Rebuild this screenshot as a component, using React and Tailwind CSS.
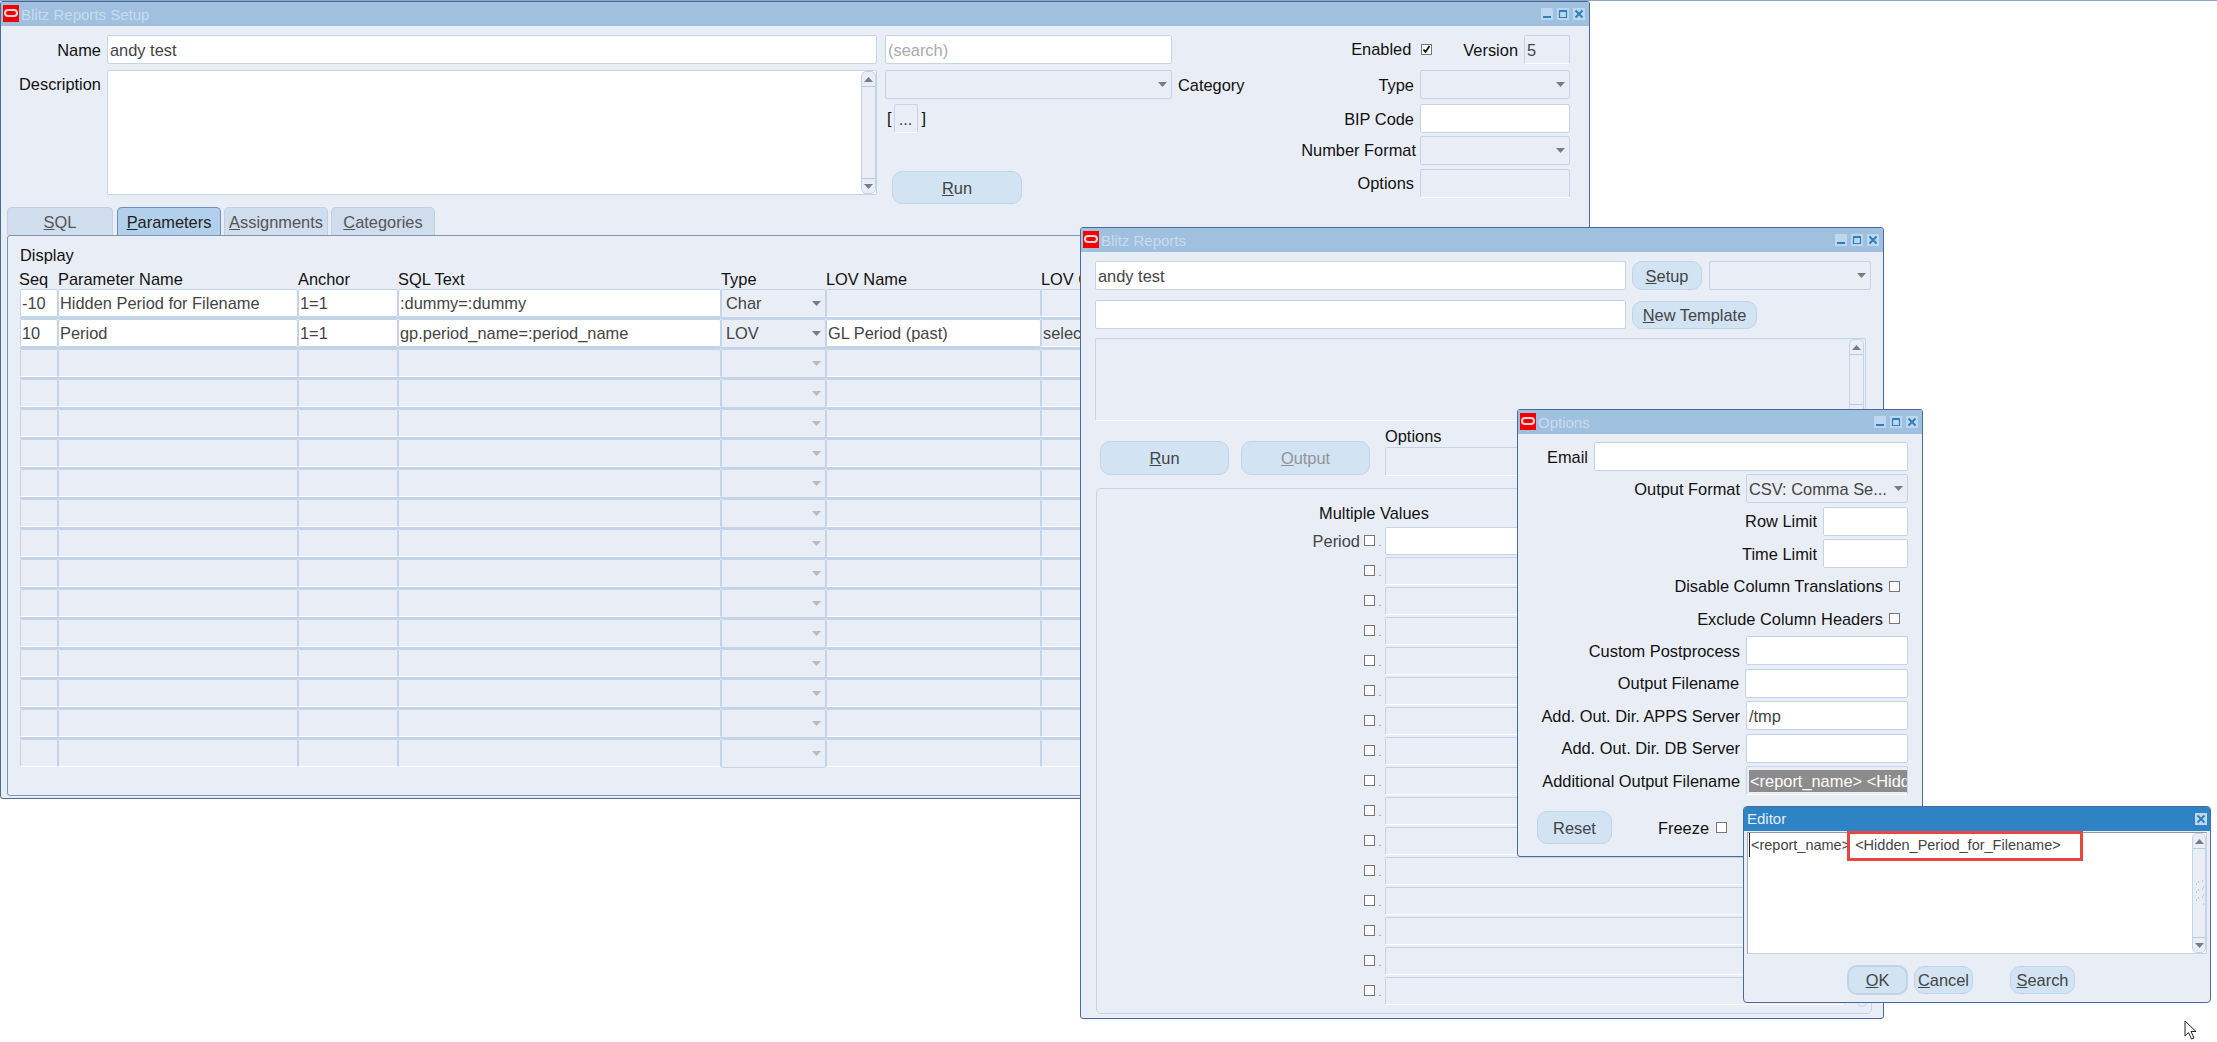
const Logo = () => (
    <div className="w-[16px] h-[17px] bg-[#f40000] flex items-center justify-center shrink-0 ml-px mb-px">
        <div className="w-[14px] h-[8px] rounded-full border-2 border-[#f6d6d6] mb-[2px]"></div>
    </div>
)

const Ctrl = ({ type }) => (
    <div className="w-[12px] h-[12px] bg-[#bcd7ef] flex items-center justify-center">
        <svg width="12" height="12" viewBox="0 0 12 12">
            {type === "min" && <rect x="2" y="8" width="8" height="2" fill="#2f7fc0" />}
            {type === "max" && <path d="M2.500 3.500h7v6h-7z M2 2.500h8" fill="none" stroke="#2f7fc0" strokeWidth="1.2" />}
            {type === "close" && <path d="M2.500 2.500l7 7M9.500 2.500l-7 7" fill="none" stroke="#2f7fc0" strokeWidth="2" />}
        </svg>
    </div>
)

const Win = ({ title, className, children }) => (
    <div className={`absolute border border-[#4a6a9c] px-px pb-px rounded-[3px] bg-[#e9eef6] overflow-hidden ${className}`}>
        <div className="h-[24px] -mx-px pl-px pr-px bg-[#9fc1df] flex items-center">
            <Logo />
            <span className="ml-[2px] text-[15px] leading-none text-[#c9dcee]">{title}</span>
            <div className="ml-auto flex gap-[4px] pr-[3px]">
                <Ctrl type="min" />
                <Ctrl type="max" />
                <Ctrl type="close" />
            </div>
        </div>
        {children}
    </div>
)

const Arrow = ({ up, light }) => (
    <svg width="9" height="5" viewBox="0 0 9 5" className="shrink-0">
        <path d={up ? "M4.500 0L9 5H0z" : "M0 0h9L4.500 5z"} fill={light ? "#b7bac0" : "#777c88"} />
    </svg>
)

const Field = ({ white, className = "", children }) => (
    <div className={`h-[29px] shrink-0 rounded-[2px] border border-[#c3d4e8] flex items-center px-[2px] pt-px whitespace-nowrap overflow-hidden text-[#444] ${white ? "bg-white" : "bg-[#e9eef6] border-b-white"} ${className}`}>
        {children}
    </div>
)

const Combo = ({ className = "", light, children }) => (
    <div className={`h-[29px] shrink-0 rounded-[2px] border border-[#c3d4e8] bg-[#e9eef6] flex items-center justify-between pl-[2px] pr-[4px] text-[#444] whitespace-nowrap ${className}`}>
        <span>{children}</span>
        <Arrow light={light} />
    </div>
)

const Btn = ({ className = "", children }) => (
    <div className={`shrink-0 rounded-[10px] border border-[#c0d4e8] bg-[#d2e3f3] flex items-center justify-center pt-px text-[#444] ${className}`}>
        {children}
    </div>
)

const Check = ({ checked, className = "" }) => (
    <div className={`w-[11px] h-[11px] shrink-0 border border-[#777] bg-white flex items-center justify-center ${className}`}>
        {checked && (
            <svg width="9" height="9" viewBox="0 0 9 9">
                <path d="M1.500 4.500l2 2.500 4-6" fill="none" stroke="#111" strokeWidth="1.8" />
            </svg>
        )}
    </div>
)

const Scrollbar = ({ grip, className = "" }) => (
    <div className={`flex flex-col border border-[#c3d4e8] rounded-[5px] bg-[#e9eef6] ${className}`}>
        <div className="h-[15px] border-b border-[#b9c9dd] flex items-center justify-center"><Arrow up /></div>
        <div className="flex-1 flex items-center justify-center">
            {grip && (
                <svg width="9" height="26" viewBox="0 0 9 26">
                    <path d="M1 4h1M7 1h1M1 12h1M7 9h1M1 20h1M7 17h1M3 2h1M8 7h1M3 10h1M8 15h1M3 18h1M8 24h1" stroke="#9aa6b5" />
                </svg>
            )}
        </div>
        <div className="h-[15px] border-t border-[#b9c9dd] flex items-center justify-center"><Arrow /></div>
    </div>
)

const Tab = ({ active, className = "", children }) => (
    <div className={`h-[28px] rounded-t-[5px] border border-b-0 flex items-center justify-center pt-px ${active ? "bg-[#b2d0ec] border-[#6f8fb8] text-[#222]" : "bg-[#cfdded] border-[#c0d0e4] text-[#555]"} ${className}`}>
        {children}
    </div>
)

const widths = ["w-[38px]", "w-[240px]", "w-[100px]", "w-[323px]", "w-[105px]", "w-[215px]", "w-[300px]"]

const Cell = ({ className = "", white, children }) => (
    <div className={`h-[28px] shrink-0 rounded-[2px] border border-[#c3d4e8] flex items-center pl-px whitespace-nowrap overflow-hidden text-[#444] ${white ? "bg-white" : "bg-[#e9eef6] border-b-white"} ${className}`}>
        {children}
    </div>
)

const paramRows = [
    ["-10", "Hidden Period for Filename", "1=1", ":dummy=:dummy", "Char", "", ""],
    ["10", "Period", "1=1", "gp.period_name=:period_name", "LOV", "GL Period (past)", "select"],
    ...Array.from({ length: 14 }, () => ["", "", "", "", "", "", ""]),
]

const ParamTable = () => (
    <div>
        {paramRows.map((r, i) => (
            <div key={i} className="flex h-[30px] w-max border-b-2 border-[#c3d4e8] last:border-b-0">
                <Cell white={i < 2} className={widths[0]}>{r[0]}</Cell>
                <Cell white={i < 2} className={widths[1]}>{r[1]}</Cell>
                <Cell white={i < 2} className={widths[2]}>{r[2]}</Cell>
                <Cell white={i < 2} className={widths[3]}>{r[3]}</Cell>
                <Combo light={i > 1} className={`h-[28px] ${widths[4]}`}><span className="ml-[2px]">{r[4]}</span></Combo>
                <Cell white={i === 1} className={widths[5]}>{r[5]}</Cell>
                <Cell className={widths[6]}>{r[6]}</Cell>
            </div>
        ))}
    </div>
)

const SetupWindow = () => (
    <Win title="Blitz Reports Setup" className="left-0 top-px w-[1590px] h-[798px]">
        <div className="flex items-start pt-[9px] h-[178px]">
            <div className="w-[875px] shrink-0">
                <div className="flex items-center gap-[6px]">
                    <span className="w-[99px] text-right pt-px">Name</span>
                    <Field white className="flex-1">andy test</Field>
                </div>
                <div className="flex items-start gap-[6px] mt-[6px]">
                    <span className="w-[99px] text-right mt-[2px] whitespace-nowrap">Description</span>
                    <div className="flex-1 h-[125px] rounded-[2px] border border-[#c3d4e8] bg-white flex justify-end">
                        <Scrollbar className="w-[15px] h-full" />
                    </div>
                </div>
            </div>
            <div className="w-[400px] ml-[8px] shrink-0">
                <Field white className="w-[287px]"><span className="text-[#aaa]">(search)</span></Field>
                <div className="flex items-center gap-[6px] mt-[6px]">
                    <Combo className="w-[287px]" />
                    <span className="pt-px">Category</span>
                </div>
                <div className="flex items-center mt-[5px] pl-[2px]">
                    <span>[</span>
                    <Field className="w-[24px] ml-[2px] justify-center">...</Field>
                    <span className="ml-[4px]">]</span>
                </div>
                <Btn className="w-[130px] h-[33px] ml-[7px] mt-[38px]"><span><u>R</u>un</span></Btn>
            </div>
            <div className="flex-1 flex flex-col items-end pr-[18px]">
                <div className="flex items-center h-[29px]">
                    <span>Enabled</span>
                    <Check checked className="ml-[10px]" />
                    <span className="ml-[31px] pt-px">Version</span>
                    <Field className="w-[46px] ml-[6px]">5</Field>
                </div>
                <div className="flex items-center gap-[6px] mt-[6px] whitespace-nowrap">
                    <span className="pt-px">Type</span>
                    <Combo className="w-[150px]" />
                </div>
                <div className="flex items-center gap-[6px] mt-[5px] whitespace-nowrap">
                    <span className="pt-px">BIP Code</span>
                    <Field white className="w-[150px]" />
                </div>
                <div className="flex items-center gap-[4px] mt-[3px] whitespace-nowrap">
                    <span>Number Format</span>
                    <Combo className="w-[150px]" />
                </div>
                <div className="flex items-center gap-[6px] mt-[4px] whitespace-nowrap">
                    <span>Options</span>
                    <Field className="w-[150px]" />
                </div>
            </div>
        </div>
        <div className="flex pl-[5px] mt-[3px]">
            <Tab className="w-[106px]"><span><u>S</u>QL</span></Tab>
            <Tab active className="w-[104px] ml-[4px]"><span><u>P</u>arameters</span></Tab>
            <Tab className="w-[104px] ml-[3px]"><span><u>A</u>ssignments</span></Tab>
            <Tab className="w-[104px] ml-[3px]"><span><u>C</u>ategories</span></Tab>
        </div>
        <div className="ml-[5px] mr-[13px] h-[561px] border border-[#7b95b8] rounded-[3px] pl-[12px] pt-[9px]">
            <div className="h-[20px] leading-[20px]">Display</div>
            <div className="flex h-[20px] leading-[20px] mt-[4px] whitespace-nowrap">
                <span className={`${widths[0]} -ml-px`}>Seq</span>
                <span className={`${widths[1]} ml-px`}>Parameter Name</span>
                <span className={widths[2]}>Anchor</span>
                <span className={widths[3]}>SQL Text</span>
                <span className={widths[4]}>Type</span>
                <span className={widths[5]}>LOV Name</span>
                <span className={widths[6]}>LOV Command</span>
            </div>
            <ParamTable />
        </div>
    </Win>
)

const multiRows = Array.from({ length: 16 }, (_, i) => i)

const ReportsWindow = () => (
    <Win title="Blitz Reports" className="left-[1080px] top-[227px] w-[804px] h-[792px]">
        <div className="pl-[13px] pt-[9px]">
            <div className="flex items-center">
                <Field white className="w-[531px]">andy test</Field>
                <Btn className="w-[70px] h-[29px] ml-[6px]"><span><u>S</u>etup</span></Btn>
                <Combo className="w-[162px] ml-[7px]" />
            </div>
            <div className="flex items-center mt-[10px]">
                <Field white className="w-[531px]" />
                <Btn className="w-[125px] h-[28px] ml-[6px]"><span><u>N</u>ew Template</span></Btn>
            </div>
            <div className="w-[771px] h-[83px] mt-[9px] rounded-[2px] border border-[#c3d4e8] border-b-white flex justify-end">
                <Scrollbar className="w-[15px] h-full mr-px" />
            </div>
            <div className="flex items-start mt-[5px] h-[50px]">
                <Btn className="w-[129px] h-[34px] ml-[5px] mt-[15px]"><span><u>R</u>un</span></Btn>
                <Btn className="w-[129px] h-[34px] ml-[12px] mt-[15px]"><span className="text-[#8f9499]"><u>O</u>utput</span></Btn>
                <div className="ml-[15px]">
                    <div className="h-[20px] leading-[20px]">Options</div>
                    <Field className="w-[400px] mt-px" />
                </div>
            </div>
        </div>
        <div className="ml-[14px] mt-[12px] w-[776px] h-[526px] border border-[#c3d4e8] rounded-[5px] flex">
            <div className="w-[760px]">
                <div className="h-[20px] leading-[20px] mt-[14px] pl-[222px] whitespace-nowrap">Multiple Values</div>
                <div className="mt-[4px]">
                    {multiRows.map((i) => (
                        <div key={i} className="flex h-[30px] border-b-2 border-transparent">
                            <span className="w-[263px] h-[28px] leading-[29px] text-right text-[#444]">{i === 0 ? "Period" : ""}</span>
                            <Check className="ml-[4px] mt-[8px]" />
                            <span className="w-[10px] text-[10px] leading-[32px] text-center text-[#777]">.</span>
                            <Cell white={i === 0} className="w-[460px]" />
                        </div>
                    ))}
                </div>
            </div>
            <Scrollbar className="w-[10px] h-[480px] mt-[38px]" />
        </div>
    </Win>
)

const optionRows = [
    { label: "Email", w: "w-[314px]", white: true },
    { label: "Output Format", w: "w-[162px]", combo: "CSV: Comma Se..." },
    { label: "Row Limit", w: "w-[85px]", white: true },
    { label: "Time Limit", w: "w-[85px]", white: true },
    { label: "Disable Column Translations", check: true },
    { label: "Exclude Column Headers", check: true },
    { label: "Custom Postprocess", w: "w-[162px]", white: true },
    { label: "Output Filename", w: "w-[163px]", white: true },
    { label: "Add. Out. Dir. APPS Server", w: "w-[162px]", white: true, value: "/tmp" },
    { label: "Add. Out. Dir. DB Server", w: "w-[162px]", white: true },
    { label: "Additional Output Filename", w: "w-[162px]", selected: true },
]

const OptionsWindow = () => (
    <Win title="Options" className="left-[1517px] top-[409px] w-[406px] h-[448px]">
        <div className="flex flex-col gap-[3.4px] pt-[8px] pr-[13px]">
            {optionRows.map((r) => (
                <div key={r.label} className="flex items-center justify-end gap-[6px] h-[29px] whitespace-nowrap">
                    <span className="pt-px">{r.label}</span>
                    {r.check && <Check className="mr-[8px]" />}
                    {r.combo && <Combo className={r.w}>{r.combo}</Combo>}
                    {r.white && <Field white className={r.w}>{r.value}</Field>}
                    {r.selected && (
                        <Field className={`${r.w} border-b-[#c3d4e8]`}>
                            <span className="bg-[#8c8c8c] text-white h-[22px] leading-[22px] px-[1px]">&lt;report_name&gt; &lt;Hidden_Period_for_Filename&gt;</span>
                        </Field>
                    )}
                </div>
            ))}
        </div>
        <div className="flex items-center pl-[18px] mt-[16px]">
            <Btn className="w-[75px] h-[33px]">Reset</Btn>
            <span className="ml-[46px] pt-[2px]">Freeze</span>
            <Check className="ml-[7px]" />
        </div>
    </Win>
)

const EditorWindow = () => (
    <div className="absolute left-[1743px] top-[806px] w-[468px] h-[197px] border border-[#4a6a9c] p-px pt-0 rounded-[4px] bg-[#e9eef6]">
        <div className="h-[24px] -mx-px bg-[#2d83c3] flex items-center justify-between pl-[3px] pr-[3px] rounded-t-[3px]">
            <span className="text-[15px] text-[#e4eef7]">Editor</span>
            <div className="w-[12px] h-[12px] bg-[#bcd7ef] flex items-center justify-center">
                <svg width="12" height="12" viewBox="0 0 12 12">
                    <path d="M2.500 2.500l7 7M9.500 2.500l-7 7" fill="none" stroke="#2f7fc0" strokeWidth="2" />
                </svg>
            </div>
        </div>
        <div className="relative mx-[2px] mt-px h-[122px] border border-[#c3d4e8] border-t-[#999] border-l-[#aaa] bg-white flex justify-between">
            <div className="pl-[1px] pt-px text-[14.500px] leading-[22px] text-[#444] whitespace-nowrap border-l border-[#222] h-[24px] ml-[1px]">
                <span>&lt;report_name&gt;</span>
                <span className="ml-[5px]">&lt;Hidden_Period_for_Filename&gt;</span>
            </div>
            <Scrollbar grip className="w-[14px] h-full" />
            <div className="absolute left-[99px] -top-[2px] w-[236px] h-[30px] border-[3px] border-[#e8463f]"></div>
        </div>
        <div className="flex items-center pl-[102px] mt-[11px]">
            <Btn className="w-[61px] h-[30px] border-2 border-[#4a6a9c]"><span><u>O</u>K</span></Btn>
            <Btn className="w-[59px] h-[28px] ml-[6px] border-[#999]"><span><u>C</u>ancel</span></Btn>
            <Btn className="w-[65px] h-[28px] ml-[37px] border-[#999]"><span><u>S</u>earch</span></Btn>
        </div>
    </div>
)

const App = () => {
    return (
        <div className="relative w-[2217px] h-[1042px] bg-white overflow-hidden font-['Liberation_Sans',Arial,sans-serif] text-[16.400px] text-[#111]">
            <div className="absolute left-0 top-0 w-full h-px bg-[#8ba6c8]"></div>
            <SetupWindow />
            <ReportsWindow />
            <OptionsWindow />
            <EditorWindow />
            <svg className="absolute left-[2184px] top-[1020px]" width="14" height="21" viewBox="0 0 14 21">
                <path d="M1 1v15l3.500-3.500 3 6.500 2.500-1-3-6.500h5z" fill="#fff" stroke="#222" strokeWidth="1" />
            </svg>
        </div>
    )
}

export default App
